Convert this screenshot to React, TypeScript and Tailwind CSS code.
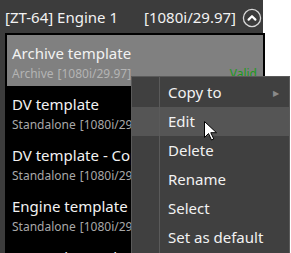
import React from "react";

const ITEMS = [
  { title: "Archive template", sub: "Archive", selected: true },
  { title: "DV template", sub: "Standalone" },
  { title: "DV template - Copy", sub: "Standalone" },
  { title: "Engine template", sub: "Standalone" },
  { title: "Network template", sub: "Standalone" },
];

const MENU = ["Copy to", "Edit", "Delete", "Rename", "Select", "Set as default"];

function CollapseIcon() {
  return (
    <svg width="20" height="20" viewBox="0 0 20 20" fill="none">
      <circle cx="10" cy="10" r="8.6" stroke="#d8d8d8" strokeWidth="1.3" />
      <path d="M6.6 11.6L10 8.2l3.4 3.4" stroke="#ffffff" strokeWidth="2.2" strokeLinecap="round" strokeLinejoin="round" />
    </svg>
  );
}

function Cursor() {
  return (
    <svg width="13" height="20" viewBox="0 0 13 20">
      <path d="M0.5 0.5v16l4-4 3 6.5 2.3-1-3-6.3h5.7z" fill="#ffffff" stroke="#000000" strokeWidth="1" strokeLinejoin="miter" />
    </svg>
  );
}

export default function App() {
  return (
    <div className="relative flex h-[253px] w-[291px] overflow-hidden bg-white text-[#f2f2f2]" style={{ fontFamily: '"Segoe UI", "Noto Sans", sans-serif' }}>
      <div className="flex w-[263px] shrink-0 flex-col bg-[#3c3c3c]">
        <div className="flex h-[33px] shrink-0 items-center pl-[5px] pr-[1px] pt-[2px] text-[15px]">
          <span>[ZT-64] Engine 1</span>
          <span className="ml-auto mr-[6px]">[1080i/29.97]</span>
          <CollapseIcon />
        </div>
        <div className="ml-[5px] flex w-[260px] shrink-0 flex-col bg-black p-[2px]">
          {ITEMS.map((it) => (
            <div key={it.title} className={`relative h-[51px] shrink-0 px-[5px] pt-[8px] ${it.selected ? "bg-[#808080]" : ""}`}>
              <p className="whitespace-nowrap text-[15px] leading-[20px]">{it.title}</p>
              <p className={`mt-[3px] flex whitespace-nowrap text-[12px] leading-[16px] ${it.selected ? "text-[#b4b4b4]" : "text-[#a8a8a8]"}`}>
                <span>{it.sub}</span>
                <span className="ml-[4px]">[1080i/29.97]</span>
                {it.selected && <span className="ml-auto pr-[1px] text-[#1d9a1d]">Valid</span>}
              </p>
            </div>
          ))}
        </div>
      </div>

      {/* context menu */}
      <div className="absolute left-[131px] top-[76px] flex h-[190px] w-[159px] flex-col border border-[#5a5a5a] bg-[#404040] pt-[1px]">
        <div className="absolute bottom-0 left-[27px] top-0 w-px bg-[#5a5a5a]" />
        {MENU.map((m, i) => (
          <div key={m} className={`flex h-[29px] shrink-0 items-center pl-[36px] pr-[10px] text-[15px] ${i === 1 ? "bg-[#555555]" : ""}`}>
            <span>{m}</span>
            {i === 0 && <span className="ml-auto text-[8px] text-[#8a8a8a]">▶</span>}
          </div>
        ))}
      </div>

      <div className="absolute left-[204px] top-[121px]">
        <Cursor />
      </div>
    </div>
  );
}
